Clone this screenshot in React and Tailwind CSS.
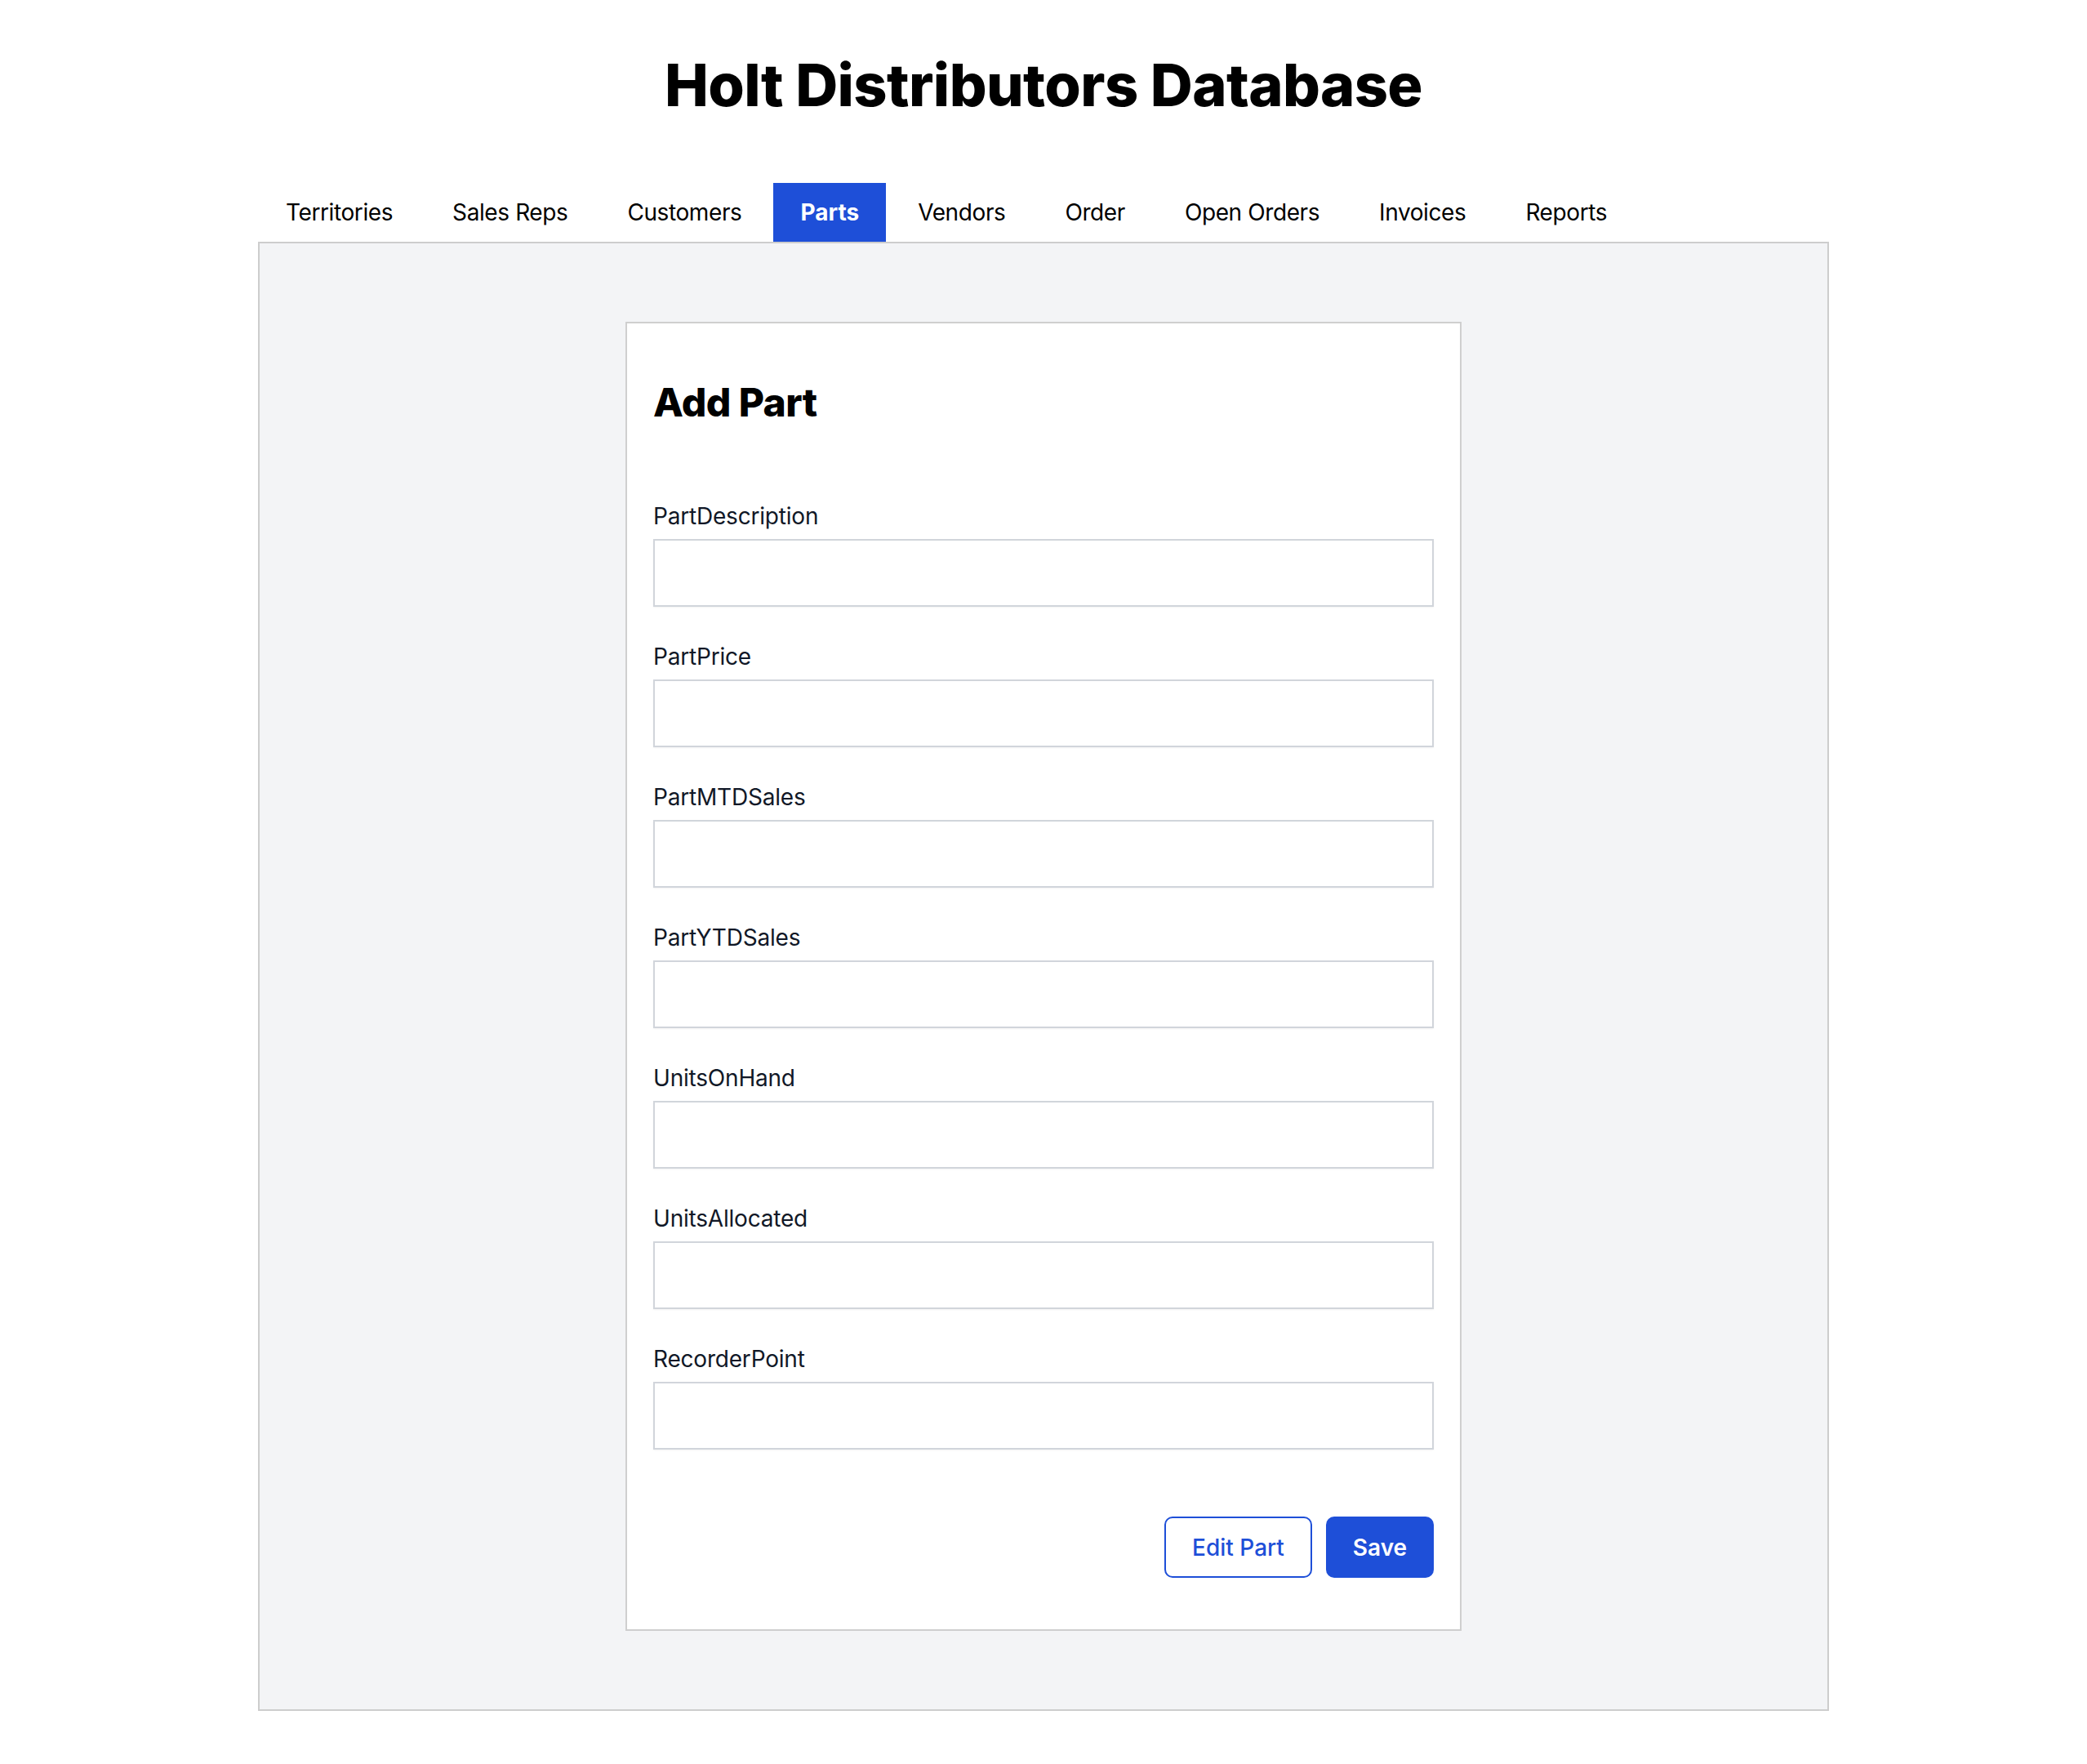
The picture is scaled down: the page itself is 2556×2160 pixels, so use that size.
import React from "react";

const tabs = ["Territories", "Sales Reps", "Customers", "Parts", "Vendors", "Order", "Open Orders", "Invoices", "Reports"];
const fields = ["PartDescription", "PartPrice", "PartMTDSales", "PartYTDSales", "UnitsOnHand", "UnitsAllocated", "RecorderPoint"];

export default function App() {
  return (
    <div className="min-h-[2160px] bg-white font-['Inter','Noto_Sans',sans-serif] text-black">
      <h1 className="pt-[68px] text-center text-[72px] font-extrabold leading-none tracking-[-0.6px]">
        Holt Distributors Database
      </h1>
      <div className="mx-auto mt-[84px] w-[1924px]">
        <nav className="flex gap-[5px]">
          {tabs.map((t) => (
            <div
              key={t}
              className={
                t === "Parts"
                  ? "flex h-[72px] items-center bg-[#1e4fd8] px-[33px] text-[28px] font-bold text-white"
                  : "flex h-[72px] items-center px-[34px] text-[28px] font-normal tracking-[-0.4px] text-black"
              }
            >
              {t}
            </div>
          ))}
        </nav>
        <div className="border-2 border-[#cdcdcd] bg-[#f3f4f6] py-[96px]">
          <div className="mx-auto w-[1024px] border-2 border-[#cfcfcf] bg-white px-[32px] pb-[63px] pt-[73px]">
            <h2 className="text-[48px] font-extrabold leading-none tracking-[-0.6px]">Add Part</h2>
            <div className="mt-[101px] flex flex-col gap-[47px]">
              {fields.map((f) => (
                <div key={f} className="flex flex-col">
                  <label className="mb-[14px] text-[28px] leading-none tracking-[-0.2px] text-[#111827]">{f}</label>
                  <input
                    type="text"
                    className="h-[83px] w-full border-2 border-[#d1d5db] bg-white shadow-[0_1px_2px_rgba(0,0,0,0.05)] outline-none"
                  />
                </div>
              ))}
            </div>
            <div className="mt-[82px] flex justify-end gap-[17px]">
              <button className="h-[75px] w-[181px] rounded-[10px] border-2 border-[#1e4fd8] bg-white text-[28px] font-medium text-[#1e4fd8]">
                Edit Part
              </button>
              <button className="h-[75px] w-[132px] rounded-[10px] bg-[#1e4fd8] text-[28px] font-semibold text-white">
                Save
              </button>
            </div>
          </div>
        </div>
      </div>
    </div>
  );
}
